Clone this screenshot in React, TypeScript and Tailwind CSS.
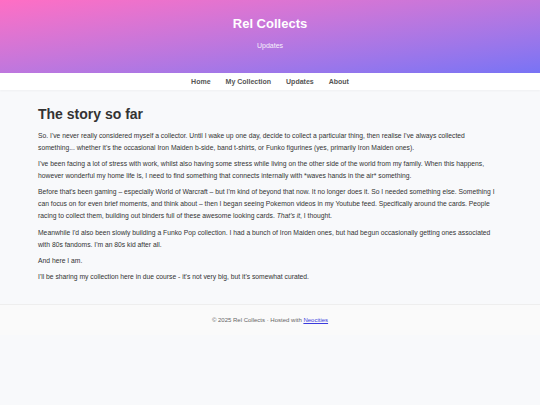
export default function App() {
  return (
    <div className="min-h-screen bg-[#f8f9fb] font-['Liberation_Sans',Arial,sans-serif] text-[#333]">
      <header className="flex h-[73px] flex-col items-center bg-gradient-to-br from-[#ff6ec4] to-[#7873f5] pt-[16px] text-white">
        <h1 className="text-[13px] font-bold leading-[16px]">Rel Collects</h1>
        <p className="mt-[9px] text-[7px] leading-[9px] opacity-90">Updates</p>
      </header>

      <nav className="flex h-[17px] items-center justify-center gap-[15px] bg-white pt-[1px] text-[7px] font-bold text-[#555] shadow-[0_1px_2px_rgba(0,0,0,0.04)]">
        <a href="#">Home</a>
        <a href="#">My Collection</a>
        <a href="#">Updates</a>
        <a href="#">About</a>
      </nav>

      <main className="px-[38px] pt-[16px] pb-[21px]">
        <h2 className="mb-[8px] text-[14px] font-bold leading-[16px] text-[#333]">The story so far</h2>
        <div className="flex flex-col gap-[4.2px] text-[6.75px] leading-[12px] text-[#333]">
          <p>
            So. I've never really considered myself a collector. Until I wake up one day, decide to collect a particular
            thing, then realise I've always collected something... whether it's the occasional Iron Maiden b-side, band
            t-shirts, or Funko figurines (yes, primarily Iron Maiden ones).
          </p>
          <p>
            I've been facing a lot of stress with work, whilst also having some stress while living on the other side of
            the world from my family. When this happens, however wonderful my home life is, I need to find something that
            connects internally with *waves hands in the air* something.
          </p>
          <p>
            Before that's been gaming – especially World of Warcraft – but I'm kind of beyond that now. It no longer does
            it. So I needed something else. Something I can focus on for even brief moments, and think about – then I
            began seeing Pokemon videos in my Youtube feed. Specifically around the cards. People racing to collect them,
            building out binders full of these awesome looking cards. <em>That's it</em>, I thought.
          </p>
          <p>
            Meanwhile I'd also been slowly building a Funko Pop collection. I had a bunch of Iron Maiden ones, but had
            begun occasionally getting ones associated with 80s fandoms. I'm an 80s kid after all.
          </p>
          <p>And here I am.</p>
          <p>I'll be sharing my collection here in due course - it's not very big, but it's somewhat curated.</p>
        </div>
      </main>

      <footer className="border-t border-[#eeeeee] bg-[#fafafa] py-[11px] text-center text-[6px] leading-[8px] text-[#666]">
        © 2025 Rel Collects · Hosted with{" "}
        <a href="#" className="text-[#3b3bdd] underline">
          Neocities
        </a>
      </footer>
    </div>
  );
}
